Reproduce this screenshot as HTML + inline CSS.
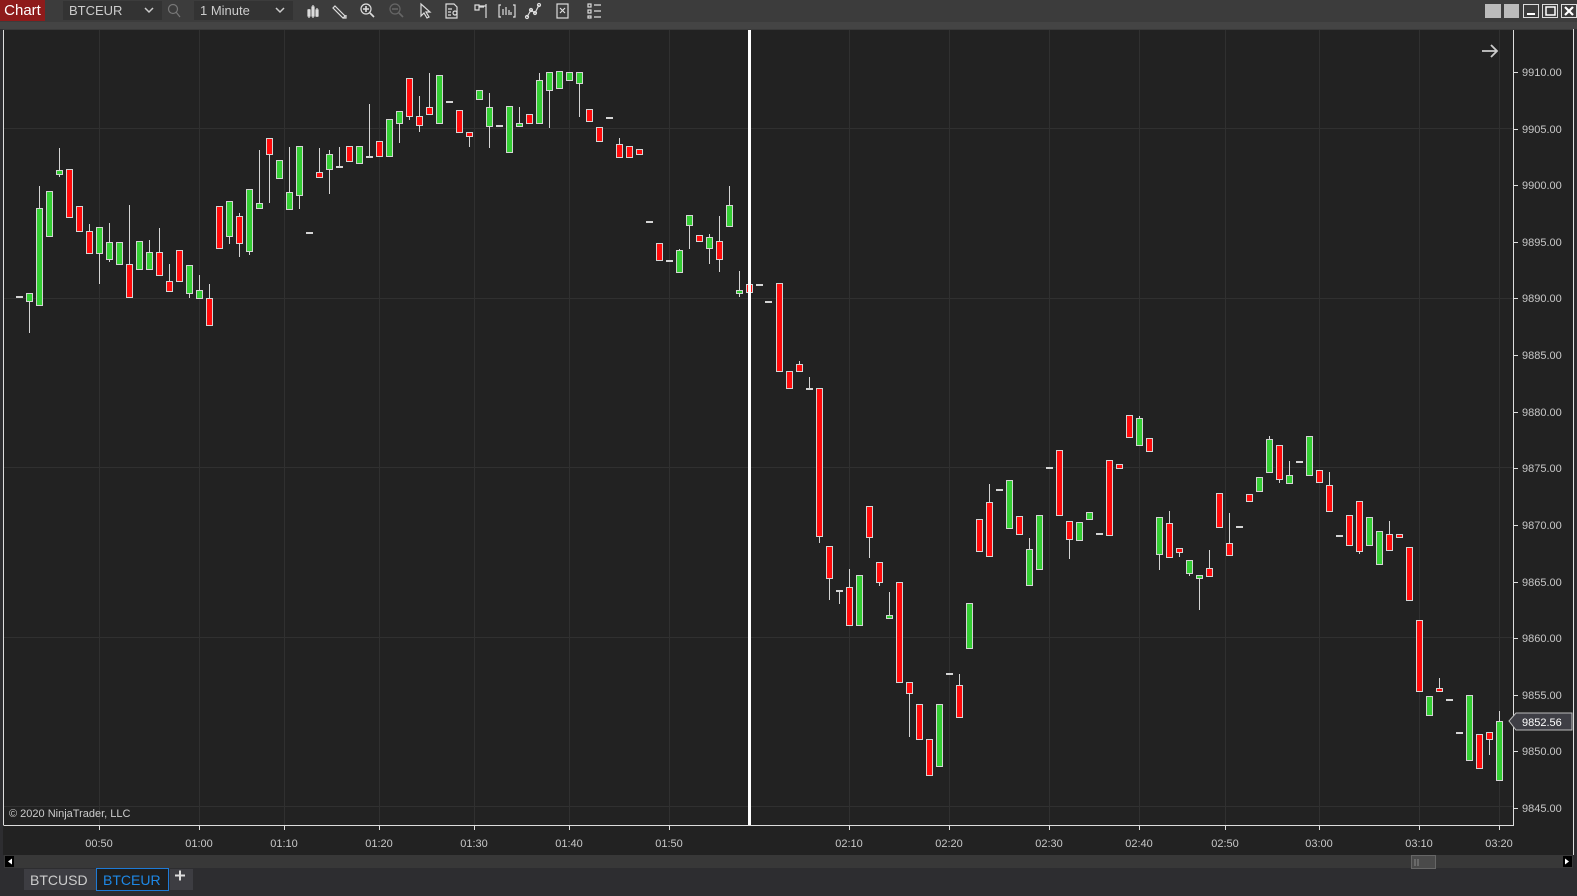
<!DOCTYPE html>
<html><head><meta charset="utf-8"><style>
html,body{margin:0;padding:0;width:1577px;height:896px;overflow:hidden;background:#2d2d30;font-family:"Liberation Sans",Arial,sans-serif;}
.abs{position:absolute}
</style></head><body>
<div class="abs" style="left:0;top:0;width:1577px;height:22px;background:#3c3c3c"></div>
<div class="abs" style="left:0;top:22px;width:1577px;height:7px;background:#444"></div>
<div class="abs" style="left:0;top:0;width:45px;height:21px;background:#8e1b1b;color:#fff;font-size:15px;line-height:21px;text-align:center">Chart</div>
<div class="abs" style="left:63px;top:1px;width:99px;height:19px;background:#333;color:#ccc;font-size:13px;line-height:19px;text-indent:6px">BTCEUR</div>
<div class="abs" style="left:194px;top:1px;width:99px;height:19px;background:#333;color:#ccc;font-size:13px;line-height:19px;text-indent:6px">1 Minute</div>
<svg class="abs" style="left:0;top:0" width="1577" height="896">
<g fill="none" stroke="#ccc" stroke-width="1.5">
<path d="M145 8l4 4 4-4"/><path d="M276 8l4 4 4-4"/>
</g>
<g fill="none" stroke="#777" stroke-width="1.2"><circle cx="173" cy="9" r="4.5"/><path d="M176 12l4 5"/></g>
<g fill="none" stroke="#ddd" stroke-width="1.2">
<path d="M309 9v9M313 5v13M317 8v9M311 10h0"/><rect x="308" y="10" width="2" height="6" fill="#ddd"/><rect x="312" y="7" width="2" height="9" fill="#ddd"/><rect x="316" y="10" width="2" height="6" fill="#ddd"/>
<path d="M335 6l10 10-2 2-10-10z M343 18l3 0 0-3"/>
<circle cx="366" cy="9" r="5"/><path d="M363 9h6M366 6v6M370 13l4 4" stroke-width="1.6"/>
<g stroke="#666"><circle cx="395" cy="9" r="5"/><path d="M392 9h6M399 13l4 4" stroke-width="1.6"/></g>
<path d="M421 4v12l3-3 3 5 2-1-3-5h4z"/>
<path d="M446 4h8l3 3v11h-11z M448 9h4M448 12h3M448 15h3"/><circle cx="455" cy="13" r="2"/>
<path d="M475 5h4v5h-4zM479 7h5M486 4v14M479 6h7"/>
<path d="M501 5h-2v12h2M513 5h2v12h-2M503 15v-6M506 15v-8M509 15v-5M511 15v-3"/>
<path d="M527 17l4-7 4 3 4-8"/><circle cx="527" cy="17" r="1.5"/><circle cx="531" cy="10" r="1.5"/><circle cx="535" cy="13" r="1.5"/><circle cx="539" cy="5" r="1.5"/>
<rect x="557" y="4" width="11" height="14"/><path d="M560 8l5 5M565 8l-5 5"/>
<rect x="588" y="4" width="3" height="3"/><rect x="588" y="10" width="3" height="3"/><rect x="588" y="16" width="3" height="2"/><path d="M594 5h7M594 11h7M594 17h7"/>
</g>
<rect x="1485" y="4" width="16" height="14" fill="#bbb"/><rect x="1504" y="4" width="15" height="14" fill="#bbb"/>
<g fill="none" stroke="#ddd" stroke-width="1"><rect x="1523.5" y="4.5" width="15" height="13"/><rect x="1542.5" y="4.5" width="15" height="13"/><rect x="1561.5" y="4.5" width="15" height="13"/></g>
<path d="M1527 14h8" stroke="#fff" stroke-width="2"/><rect x="1546" y="7" width="9" height="8" fill="none" stroke="#fff" stroke-width="1.5"/><path d="M1565 7l8 8M1573 7l-8 8" stroke="#fff" stroke-width="2.2"/>
</svg>
<svg class="abs" style="left:0;top:0" width="1577" height="896" id="c">
<rect x="3" y="29" width="1570" height="826" fill="#222"/>
<g id="grid" stroke="#303030" stroke-width="1"></g>
<g id="cd"></g>
<rect x="748" y="29" width="3" height="796" fill="#fff"/>
<path d="M3.5 29v796M3.5 825.5H1513.5V29M1573.5 29v826" stroke="#ddd" fill="none"/>
<path d="M3 29.5h1570" stroke="#3a3a3a"/>
<g id="lab" fill="#c8c8c8" font-size="11" font-family="Liberation Sans,Arial,sans-serif"></g>
<path d="M1482 51h15M1491 45l6 6-6 6" stroke="#ccc" stroke-width="1.8" fill="none"/>
<text x="9" y="817" fill="#ccc" font-size="11" font-family="Liberation Sans,Arial,sans-serif">© 2020 NinjaTrader, LLC</text>
<path d="M1509 721l7-8h56v17h-56z" fill="#3e3e45" stroke="#bbb"/>
<text x="1522" y="726" fill="#fff" font-size="11" font-family="Liberation Sans,Arial,sans-serif">9852.56</text>
<rect x="4" y="855" width="1569" height="13" fill="#383838"/>
<rect x="5" y="856" width="9" height="11" fill="#000"/><path d="M8 861.5l4-3v6z" fill="#fff"/>
<rect x="1563" y="856" width="9" height="11" fill="#000"/><path d="M1569 861.5l-4-3v6z" fill="#fff"/>
<rect x="1411.5" y="855.5" width="24" height="13" fill="#4a4a4a" stroke="#666"/>
<path d="M1415 859v7M1418 859v7" stroke="#888"/>
<rect x="24" y="869" width="72" height="21" fill="#3d3d42"/>
<rect x="96.5" y="868.5" width="72" height="22" fill="#1e1e1e" stroke="#1e7ad6"/>
<rect x="170" y="869" width="23" height="21" fill="#3d3d42"/>
<text x="30" y="885" fill="#ccc" font-size="14" font-family="Liberation Sans,Arial,sans-serif">BTCUSD</text>
<text x="103" y="885" fill="#1e88e5" font-size="14" font-family="Liberation Sans,Arial,sans-serif">BTCEUR</text>
<path d="M175 875.5h10M180 870.5v10" stroke="#ddd" stroke-width="2"/>
</svg>
<script>
var NS="http://www.w3.org/2000/svg";
function el(p,t,a,txt){var e=document.createElementNS(NS,t);for(var k in a)e.setAttribute(k,a[k]);if(txt)e.textContent=txt;p.appendChild(e);return e;}
var g=document.getElementById('grid'),cd=document.getElementById('cd'),lab=document.getElementById('lab');
[128,298,467,637,806].forEach(function(y){el(g,'path',{d:'M4 '+(y+.5)+'H1513'});});
var T=[[99,'00:50'],[199,'01:00'],[284,'01:10'],[379,'01:20'],[474,'01:30'],[569,'01:40'],[669,'01:50'],[749,''],[849,'02:10'],[949,'02:20'],[1049,'02:30'],[1139,'02:40'],[1225,'02:50'],[1319,'03:00'],[1419,'03:10'],[1499,'03:20']];
T.forEach(function(t){el(g,'path',{d:'M'+(t[0]+.5)+' 29V825'});if(t[1]){el(g,'path',{d:'M'+(t[0]+.5)+' 825v5',stroke:'#ddd'});el(lab,'text',{x:t[0],y:847,'text-anchor':'middle'},t[1]);}});
for(var p=9910;p>=9845;p-=5){var y=72+(9910-p)*11.323;el(g,'path',{d:'M1513 '+(Math.round(y)+.5)+'h5',stroke:'#ddd'});el(lab,'text',{x:1522,y:Math.round(y)+4},p.toFixed(2));}
// [x, bodyTop, bodyBot, type, wickTop, wickBot]
var C=[[19,296,296,'d'],[29,293,301,'g',293,333],[39,208,305,'g',186],[49,191,236,'g'],[59,170,174,'g',148,177],[69,169,217,'r'],[79,206,231,'r'],[89,231,253,'r',224],[99,227,253,'g',0,284],[109,242,259,'g',223,262],[119,242,264,'g'],[129,264,297,'r',205],[139,241,269,'g'],[149,252,269,'g',240],[159,252,275,'r',228],[169,281,291,'r',264],[179,250,281,'r'],[189,265,293,'g',0,298],[199,290,298,'g',275],[209,298,325,'r',284],
[219,206,248,'r'],[229,201,236,'g',0,244],[239,216,243,'r',213,257],[249,189,251,'g',0,255],[259,203,208,'g',150],[269,138,154,'r',0,203],[279,160,178,'g'],[289,192,209,'g',147],[299,146,195,'g',0,209],[309,232,232,'d'],[319,172,177,'r',148],[329,154,169,'g',150,194],[339,166,166,'d',147],[349,146,161,'r'],[359,146,163,'g'],[369,156,156,'d',104],[379,141,156,'r'],
[389,119,156,'g'],[399,111,123,'g',0,143],[409,78,116,'r',0,120],[419,116,125,'r',96,132],[429,107,114,'r',73],[439,75,123,'g'],[449,101,101,'d'],[459,110,132,'r'],[469,132,136,'r',0,147],[479,90,99,'g'],[489,107,126,'g',93,148],[499,125,125,'d'],[509,106,152,'g'],[519,123,126,'g',107],[529,114,123,'r'],[539,80,123,'g',73],[549,72,90,'g',0,128],[559,71,88,'g'],[569,72,80,'g'],[579,72,83,'g',0,117],[589,109,121,'r'],[599,127,141,'r'],[609,117,117,'d'],[619,144,157,'r',138],[629,146,157,'r'],[639,149,154,'r'],
[649,221,221,'d'],[659,243,260,'r'],[669,260,260,'d'],[679,250,272,'g',249],[689,215,225,'g',0,249],[699,235,241,'r'],[709,237,248,'g',234,264],[719,241,259,'r',216,272],[729,205,226,'g',186],[739,290,293,'g',271,297],[749,284,292,'r',0,312],[759,284,284,'d'],[768,301,301,'d'],
[779,283,371,'r'],[789,371,388,'r'],[799,364,371,'r',361],[809,388,388,'d',377],[819,388,536,'r',0,543],[829,546,578,'r',0,600],[839,590,590,'d',0,604],[849,587,625,'r',569],[859,575,625,'g'],[869,506,537,'r',0,558],[879,562,582,'r',0,586],[889,615,617,'g',592],[899,582,682,'r'],[909,682,693,'r',0,737],[919,704,739,'r'],[929,739,775,'r'],[939,704,766,'g'],[949,673,673,'d'],[959,685,717,'r',674],[969,603,648,'g'],[979,519,551,'r'],[989,502,556,'r',484],[999,489,489,'d'],[1009,480,528,'g'],[1019,516,534,'r'],[1029,549,585,'g',538],[1039,515,569,'g'],[1049,467,467,'d'],[1059,450,515,'r'],[1069,521,539,'r',0,559],[1079,522,540,'g'],[1089,512,519,'g'],[1099,533,533,'d'],[1109,460,535,'r'],[1119,464,468,'r'],[1129,415,437,'r'],[1139,418,445,'g',416],[1149,438,451,'r'],
[1159,517,554,'g',0,570],[1169,523,557,'r',511],[1179,548,552,'r',0,557],[1189,560,573,'g',0,576],[1199,575,577,'g',0,610],[1209,568,576,'r',550],[1219,493,527,'r'],[1229,543,555,'r',513],[1239,526,526,'d'],[1249,494,501,'r'],[1259,477,491,'g'],[1269,439,472,'g',436],[1279,445,479,'r',0,483],[1289,475,483,'g',461],[1299,461,461,'d'],[1309,436,475,'g'],[1319,470,482,'r'],[1329,485,511,'r',472],[1339,535,535,'d'],[1349,515,545,'r'],[1359,501,551,'r',0,554],[1369,517,545,'g'],[1379,531,564,'g'],[1389,534,550,'r',521],[1399,534,537,'r'],[1409,547,600,'r'],[1419,620,691,'r'],[1429,696,715,'g'],[1439,688,690,'r',678],[1449,699,699,'d'],[1459,732,732,'d'],[1469,695,760,'g'],[1479,734,768,'r'],[1489,732,739,'r',0,755],[1499,721,780,'g',711]];
C.forEach(function(c){var x=c[0],t=c[1],b=c[2],ty=c[3],wt=c[4]||t,wb=c[5]||b;
 if(wt<t||wb>b)el(cd,'rect',{x:x,y:wt,width:1,height:wb-wt,fill:'#d4d4d4'});
 if(ty=='d'){el(cd,'rect',{x:x-3,y:t,width:7,height:2,fill:'#d4d4d4'});return;}
 el(cd,'rect',{x:x-3,y:t,width:7,height:Math.max(b-t+1,4),fill:'#d4d4d4'});
 el(cd,'rect',{x:x-2,y:t+1,width:5,height:Math.max(b-t-1,2),fill:ty=='g'?'#33cc33':'#ff0a0a'});});
</script>
</body></html>
